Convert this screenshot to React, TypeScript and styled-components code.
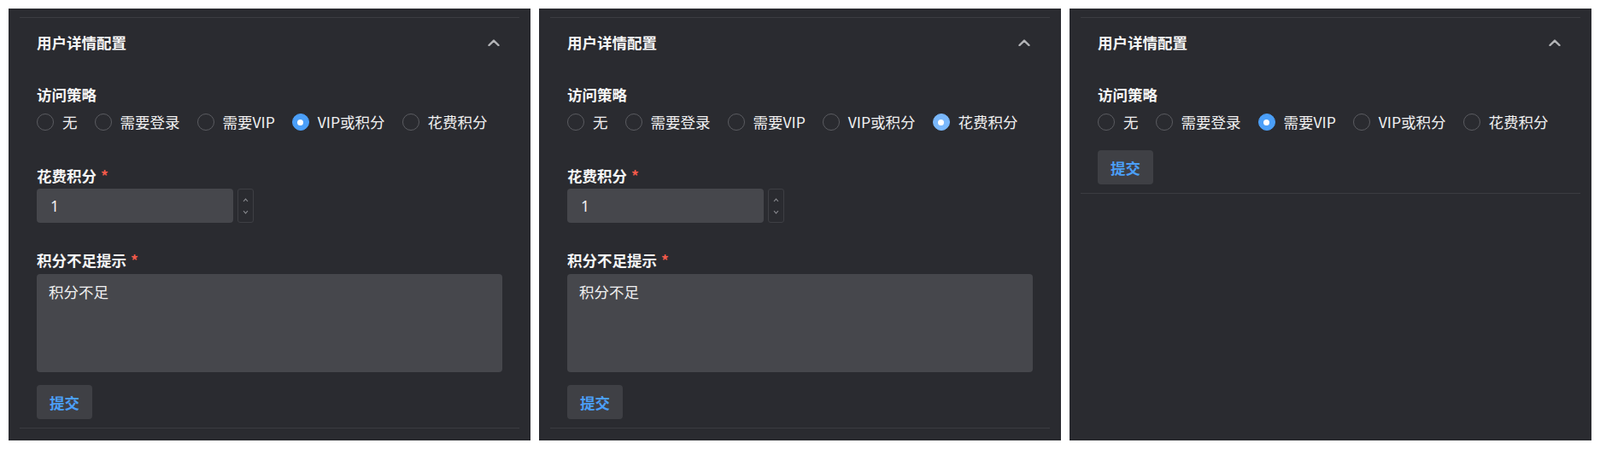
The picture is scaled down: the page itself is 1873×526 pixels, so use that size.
import React from "react";
import styled, { createGlobalStyle } from "styled-components";

const GlobalStyle = createGlobalStyle`
  html, body {
    margin: 0;
    padding: 0;
    background: #ffffff;
  }
  body {
    font-family: "Noto Sans CJK SC", "Noto Sans", "Liberation Sans", sans-serif;
    color: #f2f2f2;
  }
  * { box-sizing: border-box; }
`;

const Page = styled.div`
  display: flex;
  gap: 10px;
  padding: 10px;
  height: 526px;
  width: 1873px;
`;

const Panel = styled.section`
  flex: 1 1 0;
  min-width: 0;
  background: #2a2b30;
  padding: 10px 13px 14px;
`;

const CollapseItem = styled.div`
  border-top: 1px solid #3b3c41;
  border-bottom: 1px solid #3b3c41;
`;

const Header = styled.div`
  height: 58px;
  display: flex;
  align-items: center;
  justify-content: space-between;
  padding: 0 23px 0 20px;
`;

const Title = styled.div`
  font-size: 17.5px;
  font-weight: 700;
  color: #f5f5f5;
  line-height: 22px;
`;

const Chevron = styled.svg`
  width: 14px;
  height: 8px;
  display: block;
`;

const Body = styled.div`
  padding: 21px 20px 10px;
`;

const FormItem = styled.div<{ $gap: number }>`
  margin-bottom: ${(p) => p.$gap}px;
`;

const Label = styled.div<{ $space?: number }>`
  font-size: 17.5px;
  font-weight: 700;
  line-height: 22px;
  color: #f5f5f5;
  white-space: nowrap;
  margin-bottom: ${(p) => p.$space ?? 4}px;
`;

const Required = styled.span`
  color: #f25a4a;
  margin-left: 5px;
  font-weight: 700;
`;

const RadioGroup = styled.div`
  display: flex;
  align-items: center;
  height: 34px;
`;

const RadioOption = styled.label`
  display: flex;
  align-items: center;
  flex: 0 0 auto;
  margin-right: 20px;
  white-space: nowrap;
  cursor: pointer;
`;

const RadioCircle = styled.span<{ $checked: boolean; $light?: boolean }>`
  flex: 0 0 auto;
  width: 20px;
  height: 20px;
  border-radius: 50%;
  border: 1px solid ${(p) => (p.$checked ? (p.$light ? "#7ab8fb" : "#4b9ff8") : "#5b5c61")};
  background: ${(p) => (p.$checked ? (p.$light ? "#7ab8fb" : "#4b9ff8") : "transparent")};
  display: flex;
  align-items: center;
  justify-content: center;
  &::after {
    content: "";
    width: 7px;
    height: 7px;
    border-radius: 50%;
    background: #ffffff;
    display: ${(p) => (p.$checked ? "block" : "none")};
  }
`;

const RadioText = styled.span`
  margin-left: 10px;
  font-size: 17.5px;
  line-height: 22px;
  color: #f0f0f0;
  white-space: nowrap;
`;

const NumberRow = styled.div`
  display: flex;
  gap: 5px;
`;

const NumberInput = styled.input`
  width: 230px;
  height: 40px;
  border: none;
  outline: none;
  border-radius: 4px;
  background: #46474c;
  color: #f0f0f0;
  padding: 0 0 0 16px;
  font-family: "Noto Sans", "Noto Sans CJK SC", sans-serif;
  font-size: 17.5px;
`;

const Stepper = styled.div`
  width: 19px;
  height: 40px;
  border: 1px solid #3e3f44;
  border-radius: 3px;
  display: flex;
  flex-direction: column;
  align-items: center;
  justify-content: space-around;
  padding: 5px 0;
`;

const StepIcon = styled.svg`
  width: 7px;
  height: 5px;
  display: block;
`;

const TextArea = styled.textarea`
  display: block;
  width: 100%;
  height: 115px;
  border: none;
  outline: none;
  resize: none;
  border-radius: 4px;
  background: #46474c;
  color: #f0f0f0;
  padding: 9px 14px;
  font-family: "Noto Sans CJK SC", "Noto Sans", sans-serif;
  font-size: 17.5px;
  line-height: 24px;
`;

const SubmitButton = styled.button`
  width: 65px;
  height: 40px;
  border: none;
  border-radius: 4px;
  background: #3f4045;
  color: #4b9ff8;
  font-family: "Noto Sans CJK SC", "Noto Sans", sans-serif;
  font-size: 17.5px;
  font-weight: 700;
  padding: 0;
  cursor: pointer;
`;

const OPTIONS = ["无", "需要登录", "需要VIP", "VIP或积分", "花费积分"];

type PanelConfig = {
  selected: string;
  light?: boolean;
  points: boolean;
};

const PANELS: PanelConfig[] = [
  { selected: "VIP或积分", points: true },
  { selected: "花费积分", light: true, points: true },
  { selected: "需要VIP", points: false },
];

function ChevronUp() {
  return (
    <Chevron viewBox="0 0 14 8">
      <path d="M1.5 7 L7 1.6 L12.5 7" fill="none" stroke="#b4b5b8" strokeWidth="2.4" strokeLinecap="round" strokeLinejoin="round" />
    </Chevron>
  );
}

function ConfigPanel({ cfg }: { cfg: PanelConfig }) {
  return (
    <Panel>
      <CollapseItem>
        <Header>
          <Title>用户详情配置</Title>
          <ChevronUp />
        </Header>
        <Body>
          <FormItem $gap={cfg.points ? 35 : 16}>
            <Label>访问策略</Label>
            <RadioGroup>
              {OPTIONS.map((o) => (
                <RadioOption key={o}>
                  <RadioCircle $checked={o === cfg.selected} $light={cfg.light} />
                  <RadioText>{o}</RadioText>
                </RadioOption>
              ))}
            </RadioGroup>
          </FormItem>
          {cfg.points && (
            <>
              <FormItem $gap={33}>
                <Label>
                  花费积分<Required>*</Required>
                </Label>
                <NumberRow>
                  <NumberInput type="text" defaultValue="1" readOnly />
                  <Stepper>
                    <StepIcon viewBox="0 0 7 5">
                      <path d="M1 4 L3.5 1.2 L6 4" fill="none" stroke="#8c8d92" strokeWidth="1.1" />
                    </StepIcon>
                    <StepIcon viewBox="0 0 7 5">
                      <path d="M1 1 L3.5 3.8 L6 1" fill="none" stroke="#8c8d92" strokeWidth="1.1" />
                    </StepIcon>
                  </Stepper>
                </NumberRow>
              </FormItem>
              <FormItem $gap={15}>
                <Label $space={5}>
                  积分不足提示<Required>*</Required>
                </Label>
                <TextArea defaultValue="积分不足" readOnly />
              </FormItem>
            </>
          )}
          <SubmitButton type="button">提交</SubmitButton>
        </Body>
      </CollapseItem>
    </Panel>
  );
}

export default function App() {
  return (
    <>
      <GlobalStyle />
      <Page>
        {PANELS.map((p, i) => (
          <ConfigPanel key={i} cfg={p} />
        ))}
      </Page>
    </>
  );
}
